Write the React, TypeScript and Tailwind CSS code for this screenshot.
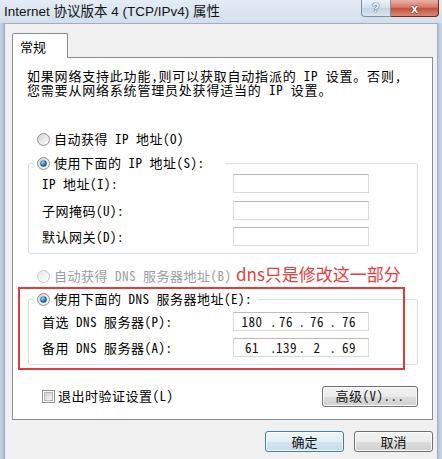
import { useId } from "react";

function Radio({ checked = false, disabled = false }: { checked?: boolean; disabled?: boolean }) {
  const id = useId().replace(/[^a-zA-Z0-9]/g, "");
  return (
    <svg width="13" height="13" viewBox="0 0 13 13" className="shrink-0">
      <defs>
        <linearGradient id={id + "o"} x1="0" y1="0" x2="1" y2="1">
          <stop offset="0" stopColor={disabled ? "#e8e8e8" : "#cfd1d3"} />
          <stop offset="1" stopColor="#ffffff" />
        </linearGradient>
        <radialGradient id={id + "d"} cx="0.4" cy="0.35" r="0.75">
          <stop offset="0" stopColor="#a6dcf8" />
          <stop offset="0.55" stopColor="#2c74ab" />
          <stop offset="1" stopColor="#123f66" />
        </radialGradient>
      </defs>
      <circle cx="6.5" cy="6.5" r="6" fill={`url(#${id}o)`} stroke={disabled ? "#c8c8c8" : "#8e8f8f"} />
      {checked && <circle cx="6.5" cy="6.5" r="3.3" fill={`url(#${id}d)`} />}
    </svg>
  );
}

function Checkbox() {
  return (
    <div className="w-[13px] h-[13px] border border-[#8e8f8f] bg-white flex items-center justify-center shrink-0">
      <div className="w-[9px] h-[9px] border border-[#b4b8bd] bg-[linear-gradient(135deg,#cbcfd5,#f7f7f7)]" />
    </div>
  );
}

function Field({ parts }: { parts?: string[] }) {
  return (
    <div className="w-[136px] h-[19px] bg-white border border-[#dadada] border-t-[#bcbcbc] flex items-center text-[13px] leading-[17px] text-[#111]">
      {parts && (
        <>
          <span className="w-[36px] text-center">{parts[0]}</span>
          <span className="w-[6px] text-center">.</span>
          <span className="w-[20px] text-center">{parts[1]}</span>
          <span className="w-[12px] text-center">.</span>
          <span className="w-[18px] text-center">{parts[2]}</span>
          <span className="w-[14px] text-center">.</span>
          <span className="w-[18px] text-center">{parts[3]}</span>
        </>
      )}
    </div>
  );
}

function Row({ label, parts, className = "" }: { label: string; parts?: string[]; className?: string }) {
  return (
    <div className={"flex items-center h-[19px] " + className}>
      <span className="w-[191px] whitespace-nowrap">{label}</span>
      <Field parts={parts} />
    </div>
  );
}

function Button({ children, primary = false, className = "" }: { children: React.ReactNode; primary?: boolean; className?: string }) {
  return (
    <div
      className={
        "h-[21px] rounded-[3px] border flex items-center justify-center text-[13px] leading-[16px] text-[#111] shadow-[inset_0_0_0_1px_rgba(255,255,255,0.85)] " +
        (primary
          ? "border-[#3c7fb1] bg-[linear-gradient(#eef5fa_0%,#e3eef6_50%,#d3e4f0_50%,#c9dcea_100%)] "
          : "border-[#707070] bg-[linear-gradient(#f2f2f2_0%,#ebebeb_50%,#dddddd_50%,#cfcfcf_100%)] ") +
        className
      }
    >
      {children}
    </div>
  );
}

export default function App() {
  return (
    <div className="w-[442px] h-[459px] overflow-hidden flex flex-col bg-[#c9d6e5] text-[13px] text-black font-['Noto_Sans_CJK_SC',sans-serif] [font-feature-settings:'hwid']">
      {/* title bar */}
      <div className="h-[23px] shrink-0 flex items-start bg-[linear-gradient(#e4ecf5,#d2deeb)]">
        <div className="pl-[4px] pt-[3px] text-[13.5px] leading-[17px] text-[#141414] whitespace-nowrap font-['Liberation_Sans','Noto_Sans_CJK_SC',sans-serif]">
          Internet 协议版本 4 (TCP/IPv4) 属性
        </div>
        <div className="ml-auto mr-[3px] flex">
          <div className="w-[30px] h-[17px] border border-t-0 border-[#7e8ea3] rounded-bl-[4px] bg-[linear-gradient(#edf2f8,#d3dfec_50%,#c3d3e4_51%,#d9e5f1)] flex items-center justify-center text-[12px] leading-none font-bold text-white font-['Liberation_Sans',sans-serif] [text-shadow:0_0_1px_#3d5470,0_0_1px_#3d5470,0_0_1px_#3d5470]">
            ?
          </div>
          <div className="w-[48px] h-[17px] border border-t-0 border-l-0 border-[#6f2b22] rounded-br-[4px] bg-[linear-gradient(#eab3a8,#d67a68_45%,#c4503b_52%,#d98b73)] flex items-center justify-center text-[13px] leading-none font-bold text-white font-['Liberation_Sans',sans-serif] [text-shadow:0_0_1px_#5a1f18,0_0_1px_#5a1f18,0_0_1px_#5a1f18]">
            x
          </div>
        </div>
      </div>

      {/* body */}
      <div className="flex-1 flex">
        <div className="w-[4px] bg-[linear-gradient(90deg,#c7d4e3,#aebfd3)]" />
        <div className="w-[433px] bg-[#f0f0f0] border-t border-l border-[#9eafc3] pl-[7px] pt-[9px]">
          {/* tab */}
          <div className="relative z-10 w-[56px] h-[25px] -mb-[1px] border border-b-0 border-[#898c95] rounded-t-[2px] bg-white pl-[7px] pt-[5px] leading-[16px]">
            常规
          </div>
          {/* panel */}
          <div className="relative w-[421px] h-[363px] border border-[#898c95] bg-white">
            <div className="mt-[11px] pl-[14px] leading-[14px] tracking-[0.8px] whitespace-nowrap">
              <div>如果网络支持此功能，则可以获取自动指派的 IP 设置。否则，</div>
              <div>您需要从网络系统管理员处获得适当的 IP 设置。</div>
            </div>

            <div className="mt-[34px] pl-[24px] h-[16px] flex items-center gap-[4px] tracking-[0.5px] whitespace-nowrap">
              <Radio />
              <span>自动获得 IP 地址(O)</span>
            </div>

            <fieldset className="mt-[8px] ml-[15px] w-[390px] border border-[#d5dfe5] rounded-[3px]">
              <legend className="ml-[4px] w-[192px] h-[16px] pl-[4px] flex items-center gap-[4px] tracking-[0.5px] whitespace-nowrap">
                <Radio checked />
                <span>使用下面的 IP 地址(S):</span>
              </legend>
              <div className="pl-[13px] pt-[3px] pb-[7px] tracking-[0.5px]">
                <Row label="IP 地址(I):" />
                <Row label="子网掩码(U):" className="mt-[8px]" />
                <Row label="默认网关(D):" className="mt-[7px]" />
              </div>
            </fieldset>

            <div className="mt-[14px] pl-[24px] h-[16px] flex items-center gap-[4px] tracking-[0.5px] whitespace-nowrap text-[#9c9c9c]">
              <Radio disabled />
              <span>自动获得 DNS 服务器地址(B)</span>
            </div>

            <fieldset className="mt-[7px] ml-[15px] w-[390px] border border-[#d5dfe5] rounded-[3px]">
              <legend className="ml-[4px] h-[16px] pl-[4px] pr-[6px] flex items-center gap-[4px] tracking-[0.5px] whitespace-nowrap">
                <Radio checked />
                <span>使用下面的 DNS 服务器地址(E):</span>
              </legend>
              <div className="pl-[13px] pt-[5px] pb-[7px] tracking-[0.5px]">
                <Row label="首选 DNS 服务器(P):" parts={["180", "76", "76", "76"]} />
                <Row label="备用 DNS 服务器(A):" parts={["61", "139", "2", "69"]} className="mt-[7px]" />
              </div>
            </fieldset>

            <div className="mt-[21px] pl-[29px] pr-[14px] h-[20px] flex items-center">
              <Checkbox />
              <span className="ml-[3px] tracking-[0.5px] whitespace-nowrap">退出时验证设置(L)</span>
              <Button className="ml-auto w-[96px] h-[20px] tracking-[0.5px]">高级(V)...</Button>
            </div>

            {/* annotation overlays */}
            <div className="absolute left-[5px] top-[229px] w-[387px] h-[83px] border-2 border-[#e33b3b] pointer-events-none" />
            <div className="absolute left-[223px] top-[206px] text-[17px] leading-[20px] text-[#e53d3d] whitespace-nowrap [font-feature-settings:normal]">
              dns只是修改这一部分
            </div>
          </div>

          {/* dialog buttons */}
          <div className="w-[421px] mt-[11px] flex justify-end gap-[10px]">
            <Button primary className="w-[79px]">确定</Button>
            <Button className="w-[79px]">取消</Button>
          </div>
        </div>
        <div className="w-[5px] border-l border-[#9eafc3] bg-[linear-gradient(90deg,#b3c3d6,#cfdae7)]" />
      </div>
    </div>
  );
}
